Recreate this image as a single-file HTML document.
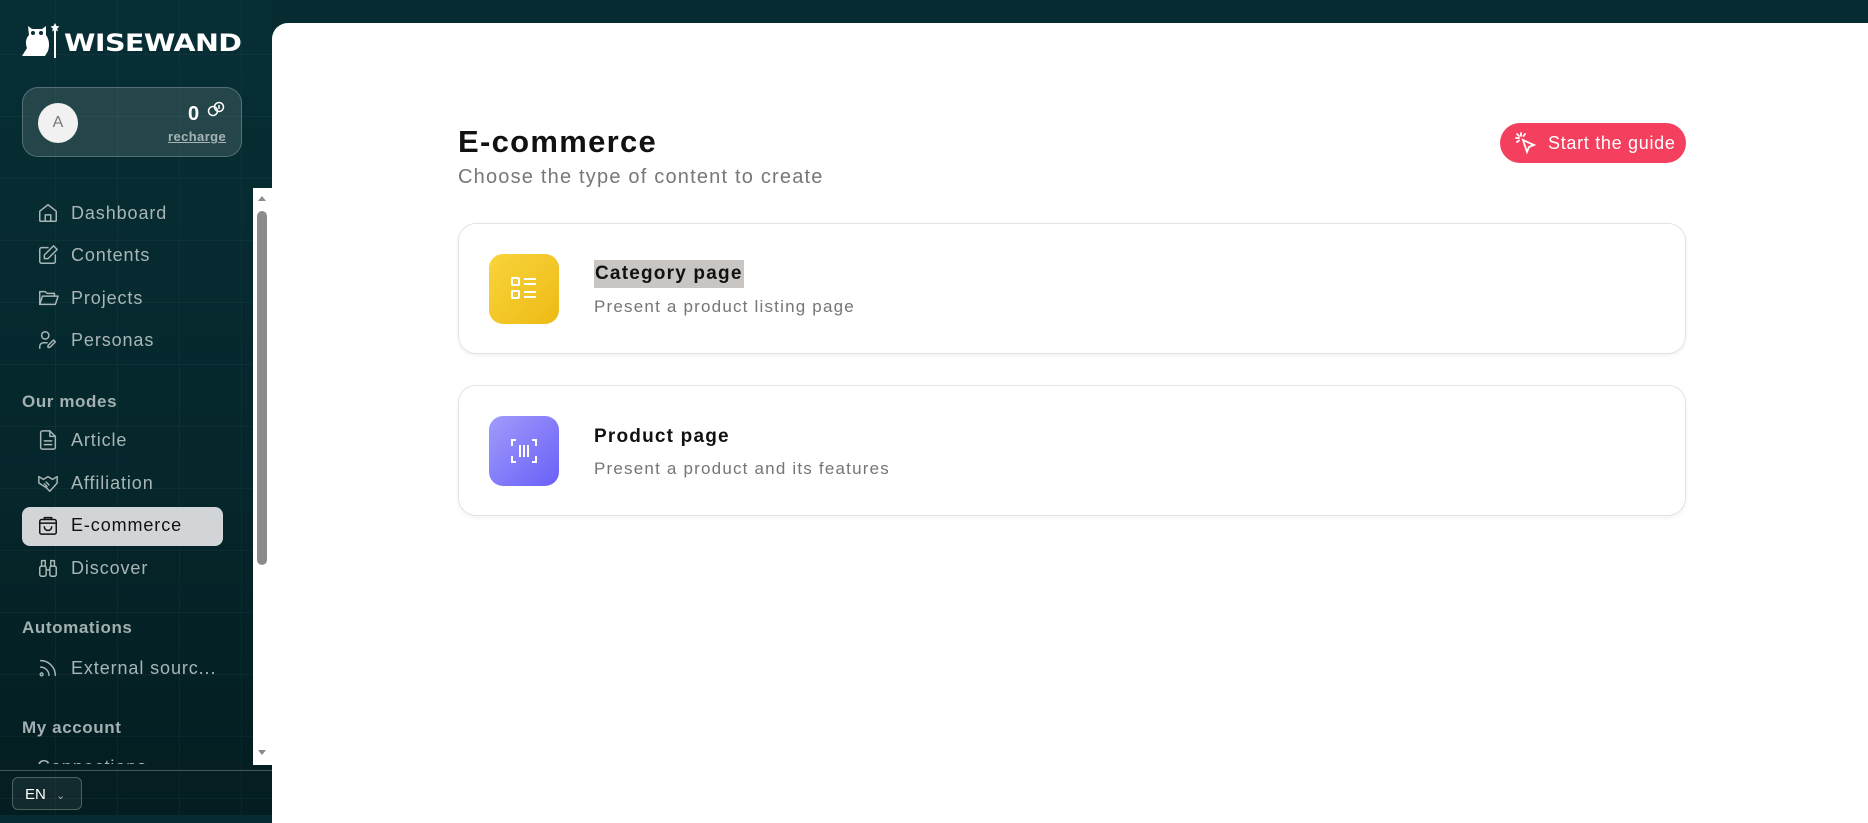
<!DOCTYPE html>
<html><head><meta charset="utf-8"><style>
*{box-sizing:border-box;margin:0;padding:0}
body{width:1868px;height:815px;overflow:hidden;font-family:"Liberation Sans",sans-serif;background:#062b31;position:relative}
.side{position:absolute;left:0;top:0;width:272px;height:815px;background:linear-gradient(180deg,#062f35 0%,#05262b 60%,#041d20 100%)}
.grid{position:absolute;left:0;top:0;width:100%;height:100%;background-image:linear-gradient(90deg,rgba(120,170,170,.06) 1px,transparent 1px),linear-gradient(0deg,rgba(120,170,170,.06) 1px,transparent 1px);background-size:62px 62px;background-position:-7px -7px}
.main{position:absolute;left:272px;top:23px;width:1600px;height:800px;background:#fff;border-top-left-radius:16px}
.nav{position:absolute;left:37px;color:#a9b6b6;font-size:18px;display:flex;align-items:center;letter-spacing:0.9px}
.nav svg{width:22px;height:22px;margin-right:12px;stroke:#a9b6b6;fill:none;stroke-width:1.6;stroke-linecap:round;stroke-linejoin:round}
.sec{position:absolute;left:22px;color:#a3b0b0;font-size:17px;font-weight:bold;letter-spacing:0.6px}
.card{position:absolute;left:458px;width:1228px;height:131px;border:1px solid #e3e3e3;border-radius:18px;box-shadow:0 2px 4px rgba(0,0,0,.05)}
.ic{position:absolute;left:30px;top:30px;width:70px;height:70px;border-radius:14px;display:flex;align-items:center;justify-content:center}
.ct{position:absolute;left:135px;font-size:19px;font-weight:bold;color:#111;letter-spacing:1.2px}
.cs{position:absolute;left:135px;font-size:17px;color:#757575;letter-spacing:1.2px}
</style></head><body>
<div class="side"><div class="grid"></div>
<svg style="position:absolute;left:22px;top:22px" width="38" height="36" viewBox="0 0 38 36"><path d="M6 4l4 3h10l4-3v9c3 4 4 10 2 16l-3 5H3l-3 0 5-8c-2-5-1-10 2-13z" fill="#fff"/><circle cx="11" cy="11" r="2" fill="#062f35"/><circle cx="19" cy="11" r="2" fill="#062f35"/><path d="M33 6v30" stroke="#fff" stroke-width="2"/><path d="M33 1l1.5 3 3 .5-2.3 2 .6 3-2.8-1.5-2.8 1.5.6-3-2.3-2 3-.5z" fill="#fff"/></svg>
<div style="position:absolute;left:64px;top:29px;color:#fff;font-weight:900;font-size:24px;letter-spacing:-0.5px;font-family:'DejaVu Sans',sans-serif;transform:scaleX(1.19);transform-origin:left">WISEWAND</div>
<div style="position:absolute;left:22px;top:87px;width:220px;height:70px;border-radius:16px;background:rgba(255,255,255,.12);border:1px solid rgba(255,255,255,.22)"></div>
<div style="position:absolute;left:38px;top:103px;width:40px;height:40px;border-radius:50%;background:#f1f1f1;color:#777;font-size:16px;display:flex;align-items:center;justify-content:center">A</div>
<div style="position:absolute;left:188px;top:103px;color:#fff;font-weight:bold;font-size:20px">0</div>
<svg style="position:absolute;left:207px;top:101px" width="18" height="16" viewBox="0 0 18 16" fill="none" stroke="#fff" stroke-width="1.5"><circle cx="6" cy="10" r="4.5"/><circle cx="12" cy="6" r="4.5"/><path d="M12 4v4"/></svg>
<div style="position:absolute;left:168px;top:129px;color:#a7b4b4;font-size:13px;font-weight:bold;text-decoration:underline;letter-spacing:0.4px">recharge</div>
<div class="nav" style="top:202px"><svg viewBox="0 0 24 24"><path d="M3 10l9-7 9 7v10a1 1 0 0 1-1 1H4a1 1 0 0 1-1-1z"/><path d="M9 21v-7h6v7"/></svg>Dashboard</div>
<div class="nav" style="top:244px"><svg viewBox="0 0 24 24"><path d="M12 4H5a2 2 0 0 0-2 2v13a2 2 0 0 0 2 2h13a2 2 0 0 0 2-2v-7"/><path d="M18 2l4 4-10 10H8v-4z"/></svg>Contents</div>
<div class="nav" style="top:287px"><svg viewBox="0 0 24 24"><path d="M3 19V5h6l2 2h8v3"/><path d="M3 19l3-9h17l-3 9z"/></svg>Projects</div>
<div class="nav" style="top:329px"><svg viewBox="0 0 24 24"><circle cx="9" cy="7" r="4"/><path d="M3 21v-2a4 4 0 0 1 4-4h4"/><path d="M20 14l-6 6h-2v-2l6-6z"/></svg>Personas</div>
<div class="sec" style="top:392px">Our modes</div>
<div class="nav" style="top:429px"><svg viewBox="0 0 24 24"><path d="M14 2H6a2 2 0 0 0-2 2v16a2 2 0 0 0 2 2h12a2 2 0 0 0 2-2V8z"/><path d="M14 2v6h6M8 13h8M8 17h8"/></svg>Article</div>
<div class="nav" style="top:472px"><svg viewBox="0 0 24 24"><path d="M2 5l5 3 5-3 5 3 5-3v7l-8 9-4-4-8-5z"/><path d="M8 13l3 3M10 11l3 3"/></svg>Affiliation</div>
<div style="position:absolute;left:22px;top:507px;width:201px;height:39px;border-radius:8px;background:#d1d5d7"></div>
<div class="nav" style="top:514px;color:#111"><svg viewBox="0 0 24 24" style="stroke:#111"><rect x="3" y="6" width="18" height="16" rx="2"/><path d="M3 10h18M8 14a4 4 0 0 0 8 0M8 6V4h8v2"/></svg>E-commerce</div>
<div class="nav" style="top:557px"><svg viewBox="0 0 24 24"><rect x="3" y="10" width="7" height="11" rx="2"/><rect x="14" y="10" width="7" height="11" rx="2"/><path d="M10 14h4M5 10V4h4v6M15 10V4h4v6"/></svg>Discover</div>
<div class="sec" style="top:618px">Automations</div>
<div class="nav" style="top:657px"><svg viewBox="0 0 24 24"><path d="M4 11a9 9 0 0 1 9 9M4 4a16 16 0 0 1 16 16"/><circle cx="5" cy="19" r="1.5"/></svg>External sourc...</div>
<div class="sec" style="top:718px">My account</div>
<div class="nav" style="top:757px;height:7px;overflow:hidden;align-items:flex-start">Connections</div>
<div style="position:absolute;left:253px;top:188px;width:19px;height:577px;background:#fff"></div>
<div style="position:absolute;left:257px;top:211px;width:10px;height:354px;border-radius:5px;background:#8b8b8b"></div>
<div style="position:absolute;left:258px;top:196px;width:0;height:0;border:4px solid transparent;border-bottom:5px solid #8b8b8b;border-top:0"></div>
<div style="position:absolute;left:258px;top:750px;width:0;height:0;border:4px solid transparent;border-top:5px solid #8b8b8b;border-bottom:0"></div>
<div style="position:absolute;left:0;top:770px;width:272px;height:1px;background:rgba(255,255,255,.25)"></div>
<div style="position:absolute;left:12px;top:777px;width:70px;height:33px;border-radius:6px;border:1px solid rgba(255,255,255,.25);background:rgba(255,255,255,.06);color:#fff;font-size:15px;padding:8px 0 0 12px">EN <span style="font-size:11px;color:#aaa;margin-left:6px">&#8964;</span></div>
</div>
<div class="main"></div>
<div style="position:absolute;left:458px;top:124px;font-size:31px;font-weight:bold;color:#111;letter-spacing:1.3px">E-commerce</div>
<div style="position:absolute;left:458px;top:166px;font-size:20px;color:#777;letter-spacing:1.2px">Choose the type of content to create</div>
<div style="position:absolute;left:1500px;top:123px;width:186px;height:40px;border-radius:20px;background:#f43f5e;color:#fff;font-size:18px;display:flex;align-items:center;padding-left:14px;letter-spacing:0.7px"><svg width="24" height="24" viewBox="0 0 24 24" fill="none" stroke="#fff" stroke-width="1.8" stroke-linecap="round" style="margin-right:10px"><path d="M9 9l4 12 2-5 5-2z"/><path d="M7 2v3M2 7h3M3 3l2 2M11 3l-1.5 2M3 11l2-1.5"/></svg>Start the guide</div>
<div class="card" style="top:223px"><div class="ic" style="background:linear-gradient(135deg,#f9d43c,#edba15)"><svg width="28" height="26" viewBox="0 0 28 26" fill="none" stroke="#fff" stroke-width="2"><rect x="2" y="2" width="7" height="7" rx="1"/><rect x="2" y="15" width="7" height="7" rx="1"/><path d="M14 3h12M14 8h12M14 16h12M14 21h12"/></svg></div>
<div class="ct" style="top:36px;background:#c8c5c3;padding:3px 1px">Category page</div><div class="cs" style="top:73px">Present a product listing page</div></div>
<div class="card" style="top:385px"><div class="ic" style="background:linear-gradient(135deg,#a09cfb,#6a5ff8)"><svg width="28" height="26" viewBox="0 0 28 26" fill="none" stroke="#fff" stroke-width="2"><path d="M6 2H2v6M22 2h4v6M6 24H2v-6M22 24h4v-6M10 7v12M14 7v12M18 7v12"/></svg></div>
<div class="ct" style="top:40px">Product page</div><div class="cs" style="top:73px">Present a product and its features</div></div>
</body></html>
